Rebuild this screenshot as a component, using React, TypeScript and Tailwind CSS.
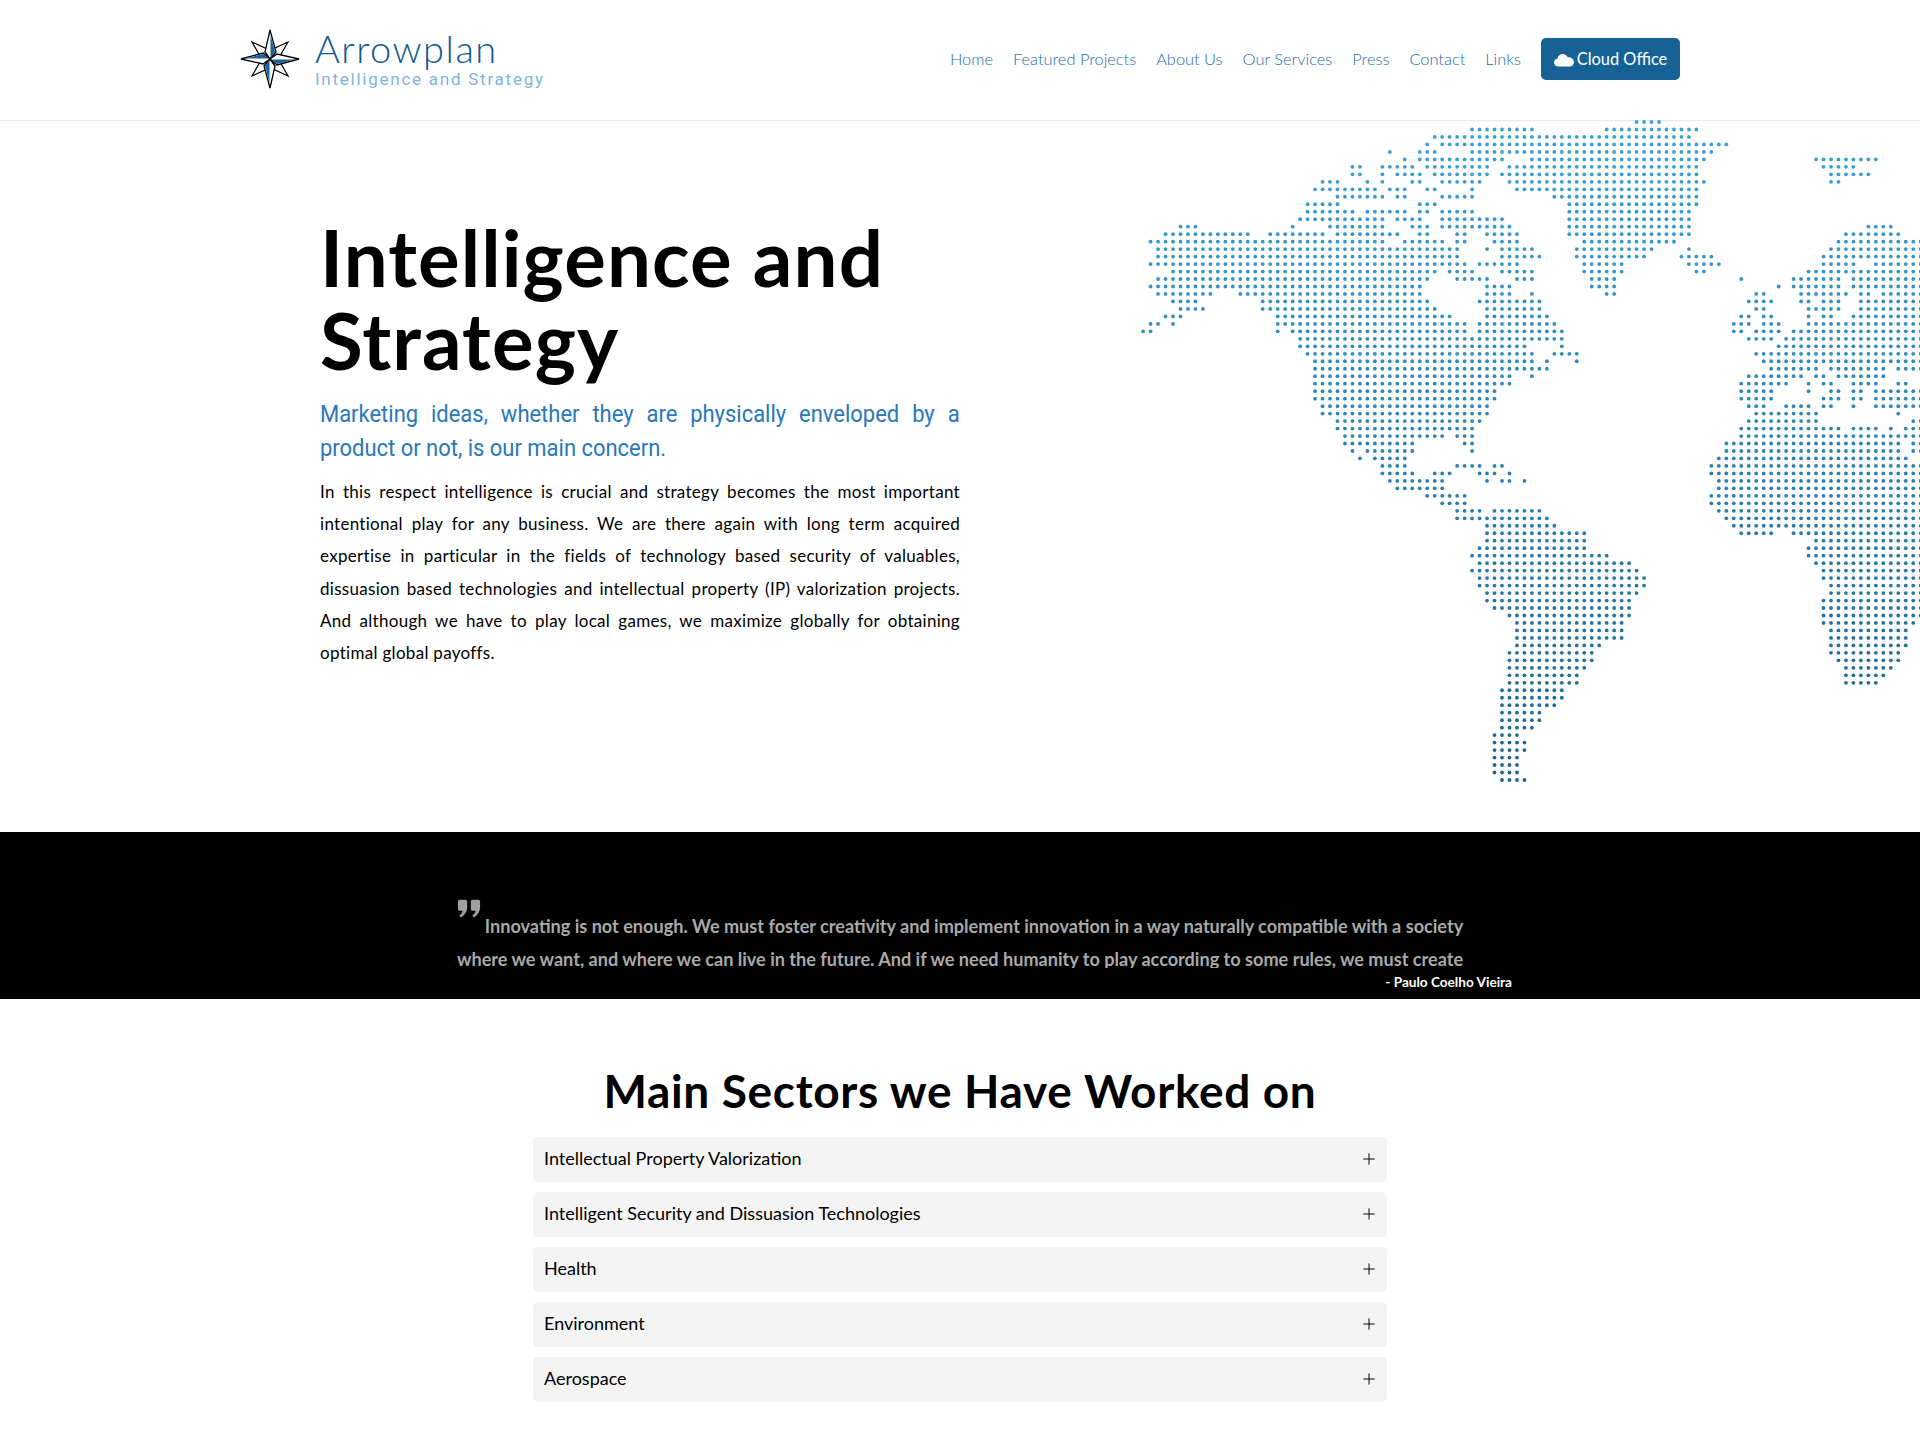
import { Plus } from 'lucide-react'

const navLinks = ['Home', 'Featured Projects', 'About Us', 'Our Services', 'Press', 'Contact', 'Links']

const sectors = [
  'Intellectual Property Valorization',
  'Intelligent Security and Dissuasion Technologies',
  'Health',
  'Environment',
  'Aerospace',
]

// dot map: one line per row, each pair is a first and last column
const mapRows: number[][] = [
  [66, 69],
  [44, 52, 62, 74],
  [39, 73],
  [38, 38, 40, 78],
  [33, 33, 37, 39, 44, 76],
  [35, 35, 37, 48, 52, 75, 90, 98],
  [28, 29, 32, 36, 38, 46, 49, 74, 91, 95],
  [28, 29, 32, 32, 34, 37, 39, 46, 48, 74, 92, 97],
  [24, 26, 30, 30, 32, 32, 36, 37, 40, 45, 49, 75, 92, 93],
  [23, 31, 33, 35, 38, 39, 44, 44, 50, 74],
  [26, 32, 34, 35, 40, 44, 55, 74],
  [22, 26, 37, 39, 57, 74],
  [22, 28, 30, 35, 37, 38, 40, 44, 57, 73],
  [21, 32, 34, 37, 40, 48, 57, 73],
  [5, 7, 20, 20, 25, 32, 36, 38, 40, 49, 57, 73, 97, 100],
  [3, 14, 17, 24, 26, 34, 37, 38, 42, 43, 46, 50, 57, 73, 94, 101],
  [1, 32, 35, 40, 42, 43, 47, 50, 59, 71, 93, 105],
  [2, 42, 46, 46, 48, 52, 58, 68, 73, 73, 92, 105],
  [2, 42, 48, 53, 58, 67, 72, 76, 91, 105],
  [1, 43, 45, 50, 59, 64, 73, 77, 91, 95, 98, 105],
  [4, 39, 41, 44, 48, 52, 59, 64, 74, 75, 89, 105],
  [2, 38, 42, 46, 50, 52, 60, 63, 80, 80, 87, 93, 95, 105],
  [1, 37, 46, 49, 60, 63, 85, 85, 87, 93, 95, 105],
  [2, 9, 13, 37, 46, 49, 52, 52, 62, 63, 82, 83, 88, 94, 96, 97, 99, 105],
  [4, 7, 16, 38, 45, 53, 81, 84, 88, 89, 91, 93, 96, 105],
  [5, 8, 16, 39, 46, 53, 82, 83, 89, 93, 96, 105],
  [3, 5, 18, 41, 46, 54, 80, 81, 83, 84, 89, 89, 91, 92, 95, 105],
  [1, 2, 4, 4, 18, 43, 45, 55, 79, 81, 83, 85, 89, 105],
  [0, 1, 18, 18, 20, 43, 45, 56, 79, 80, 82, 85, 87, 105],
  [21, 56, 81, 84, 86, 105],
  [21, 51, 56, 56, 85, 105],
  [22, 52, 55, 58, 82, 105],
  [23, 52, 54, 54, 58, 58, 83, 105],
  [23, 54, 84, 90, 92, 99, 101, 105],
  [23, 49, 52, 52, 81, 88, 90, 91, 93, 99],
  [23, 49, 80, 86, 89, 89, 91, 92, 95, 98, 101, 102],
  [23, 47, 80, 84, 89, 89, 92, 93, 95, 96, 98, 105],
  [23, 47, 80, 84, 91, 93, 95, 96, 98, 105],
  [24, 46, 81, 83, 86, 89, 91, 92, 95, 95, 98, 105],
  [24, 46, 82, 90, 101, 101],
  [26, 45, 81, 90, 103, 105],
  [26, 44, 80, 93, 95, 98, 100, 100, 102, 105],
  [27, 40, 42, 44, 80, 105],
  [27, 36, 43, 44, 78, 101, 103, 105],
  [28, 28, 30, 36, 44, 44, 78, 101, 103, 105],
  [29, 29, 31, 35, 77, 102, 105, 105],
  [32, 35, 42, 45, 47, 48, 76, 105],
  [32, 36, 39, 41, 45, 47, 49, 49, 76, 105],
  [33, 40, 46, 46, 48, 49, 51, 51, 77, 105],
  [34, 40, 77, 105],
  [38, 43, 76, 105],
  [40, 43, 76, 105],
  [42, 45, 47, 53, 77, 105],
  [42, 54, 78, 105],
  [46, 55, 79, 105],
  [46, 59, 80, 84, 87, 105],
  [46, 59, 90, 105],
  [45, 59, 89, 105],
  [44, 62, 89, 105],
  [45, 65, 90, 105],
  [44, 66, 91, 105],
  [45, 67, 91, 105],
  [45, 67, 92, 105],
  [46, 66, 92, 105],
  [46, 65, 91, 105],
  [47, 65, 91, 105],
  [49, 65, 91, 105],
  [50, 64, 91, 103],
  [50, 64, 92, 102],
  [50, 64, 92, 102],
  [50, 61, 92, 102],
  [49, 60, 92, 101],
  [49, 60, 93, 101],
  [49, 59, 94, 100],
  [49, 58, 94, 99],
  [49, 58, 94, 98],
  [48, 56],
  [48, 56],
  [48, 55],
  [48, 53],
  [48, 53],
  [48, 52],
  [47, 50],
  [47, 51],
  [47, 51],
  [47, 50],
  [47, 50],
  [47, 50],
  [48, 51],
]

function DotMap() {
  const dots: { x: number; y: number }[] = []
  mapRows.forEach((row, r) => {
    for (let i = 0; i < row.length; i += 2) {
      for (let c = row[i]; c <= row[i + 1]; c++) {
        dots.push({ x: 3.1 + c * 7.477, y: 4 + r * 7.477 })
      }
    }
  })
  return (
    <svg width="780" height="670" viewBox="0 0 780 670" className="absolute right-0 top-[-3px]">
      <defs>
        <linearGradient id="mapFill" gradientUnits="userSpaceOnUse" x1="0" y1="0" x2="0" y2="670">
          <stop offset="0" stopColor="#3aa2d8" />
          <stop offset="1" stopColor="#1e6390" />
        </linearGradient>
      </defs>
      <g fill="url(#mapFill)">
        {dots.map((d, i) => (
          <circle key={i} cx={d.x} cy={d.y} r="1.9" />
        ))}
      </g>
    </svg>
  )
}

function CompassLogo() {
  return (
    <svg width="60" height="60" viewBox="0 0 60 60" className="shrink-0">
      <g fill="#fff" stroke="#000" strokeWidth="1.200" strokeLinejoin="miter">
        <polygon points="12,13 27,20 30,30 20,27" />
        <polygon points="48,13 40,27 30,30 33,20" />
        <polygon points="48,47 33,40 30,30 40,33" />
        <polygon points="12,47 20,33 30,30 27,40" />
      </g>
      <g stroke="#000" strokeWidth="1.300" strokeLinejoin="miter">
        <polygon points="30,1 36,23 30,30 25,23" fill="#fff" />
        <polygon points="59,30 37,36 30,30 37,25" fill="#fff" />
        <polygon points="30,59 24,37 30,30 35,37" fill="#fff" />
        <polygon points="1,30 23,24 30,30 23,35" fill="#fff" />
      </g>
      <g fill="#17639a">
        <polygon points="30.500,6 35,23 30.500,28.500" />
        <polygon points="54,30.500 37,35 31.500,30.500" />
        <polygon points="29.500,54 25,37 29.500,31.500" />
        <polygon points="6,29.500 23,25 28.500,29.500" />
      </g>
    </svg>
  )
}

export default function App() {
  return (
    <div className="min-h-[1440px] overflow-hidden bg-white font-['Lato',sans-serif] text-black">
      {/* Header */}
      <header className="h-[121px] border-b border-[#e8e8e8]">
        <div className="mx-auto flex h-full w-[1440px] items-center pb-[2px]">
          <div className="flex items-center gap-[15px]">
            <CompassLogo />
            <div>
              <div className="text-[38px] font-light leading-[38px] tracking-[1.500px] text-[#0f5a90]">Arrowplan</div>
              <div className="mt-[2px] font-['Roboto',sans-serif] text-[17px] leading-[20px] tracking-[1.750px] text-[#7fb3e3]">
                Intelligence and Strategy
              </div>
            </div>
          </div>
          <nav className="ml-auto flex items-center gap-5 text-[16.400px] font-light text-[#1f6cae]">
            {navLinks.map((link) => (
              <a key={link} href="#">
                {link}
              </a>
            ))}
            <a href="#" className="flex h-[42px] w-[139px] items-center justify-center gap-[3px] rounded-[5px] bg-[#166296] font-normal text-white">
              <svg width="20" height="16" viewBox="0 0 20 16" fill="#fff">
                <path d="M4.500 15.500C2 15.500 0 13.700 0 11.400c0-2 1.500-3.700 3.500-4C4 4.800 6.200 3 8.800 3c2.200 0 4.100 1.300 4.900 3.200 3.200-.3 6.300 1.800 6.300 5 0 2.400-2 4.300-4.500 4.300z" />
              </svg>
              Cloud Office
            </a>
          </nav>
        </div>
      </header>

      {/* Hero */}
      <section className="relative h-[711px]">
        <DotMap />
        <div className="relative ml-[320px] w-[640px] pt-[95px]">
          <h1 className="text-[78px] font-bold leading-[83px] tracking-[1.100px]">Intelligence and Strategy</h1>
          <p className="mt-[15px] w-[699px] origin-left scale-x-[0.915] text-justify font-['Roboto',sans-serif] text-[24px] leading-[34px] text-[#2878ba]">
            Marketing ideas, whether they are physically enveloped by a product or not, is our main concern.
          </p>
          <p className="mt-[11px] text-justify text-[17px] leading-[32.200px] tracking-[0.300px]">
            In this respect intelligence is crucial and strategy becomes the most important intentional play for any business. We are there again with long term acquired expertise in particular in the fields of technology based security of valuables, dissuasion based technologies and intellectual property (IP) valorization projects. And although we have to play local games, we maximize globally for obtaining optimal global payoffs.
          </p>
        </div>
      </section>

      {/* Quote band */}
      <section className="h-[167px] overflow-hidden bg-black">
        <div className="mx-auto h-[136px] w-[1030px] overflow-hidden pt-[78px] text-center text-[18.100px] font-bold leading-[33px] text-[#a9a9a9]">
          <svg width="24" height="22" viewBox="0 0 26 22" fill="#a0a0a0" className="mr-[4px] inline-block -translate-y-[19px]">
            <path d="M3 1h6a2 2 0 0 1 2 2v6c0 5-3 9-7 11l-1.500-2c2-1 3.500-3 3.500-5H3a2 2 0 0 1-2-2V3a2 2 0 0 1 2-2zM17 1h6a2 2 0 0 1 2 2v6c0 5-3 9-7 11l-1.500-2c2-1 3.500-3 3.500-5h-3a2 2 0 0 1-2-2V3a2 2 0 0 1 2-2z" />
          </svg>
          Innovating is not enough. We must foster creativity and implement innovation in a way naturally compatible with a society
          <br />
          where we want, and where we can live in the future. And if we need humanity to play according to some rules, we must create
        </div>
        <div className="pr-[408px] pt-[6px] text-right text-[13.600px] font-bold leading-[16px] text-white">- Paulo Coelho Vieira</div>
      </section>

      {/* Sectors */}
      <section className="pt-[62px]">
        <h2 className="text-center text-[46px] font-bold leading-[60px] tracking-[0.650px]">Main Sectors we Have Worked on</h2>
        <div className="mx-auto mt-[16px] flex w-[854px] flex-col gap-[10px]">
          {sectors.map((sector) => (
            <div key={sector} className="flex h-[45px] items-center justify-between rounded-[5px] bg-[#f4f4f4] pb-[2px] pl-[11px] pr-[9px] text-[18px]">
              <span>{sector}</span>
              <Plus size={18} strokeWidth={1.3} />
            </div>
          ))}
        </div>
      </section>
    </div>
  )
}
